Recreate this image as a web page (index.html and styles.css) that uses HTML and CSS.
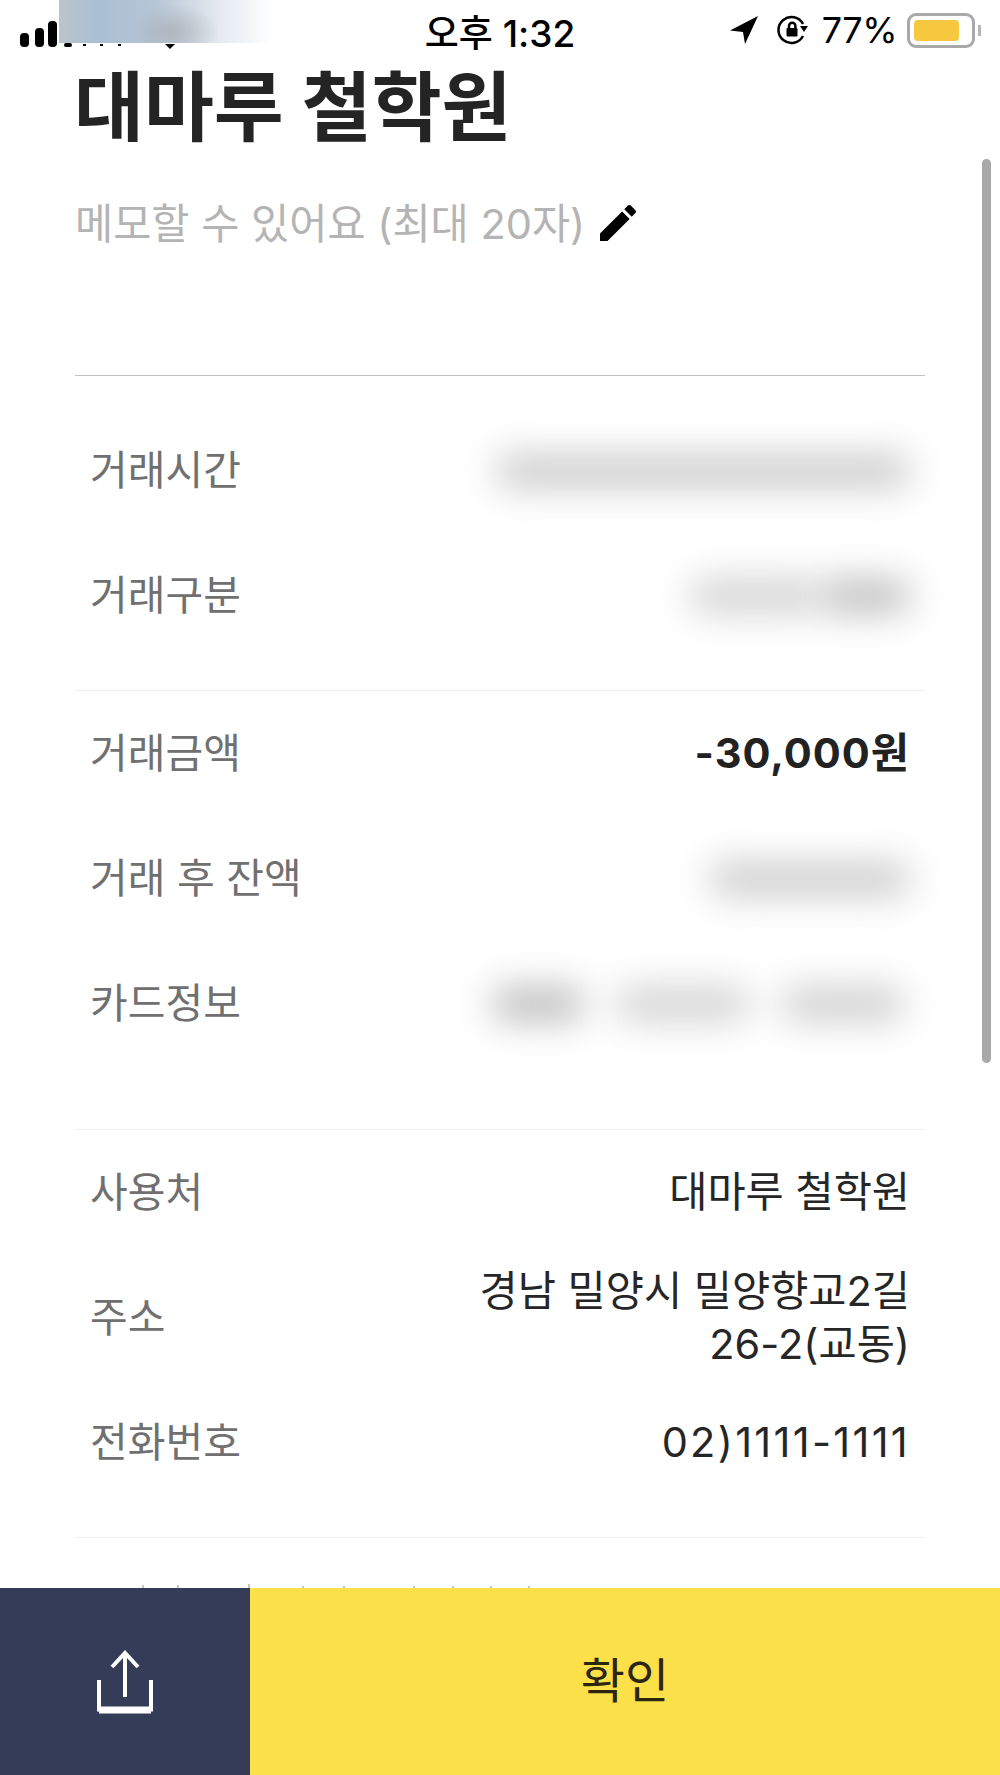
FILE: index.html
```html
<!DOCTYPE html>
<html lang="ko">

<head>
    <meta charset="UTF-8">
    <meta name="viewport" content="width=device-width, initial-scale=1.0">
    <title>거래 상세</title>
    <link rel="stylesheet" href="styles.css">
</head>

<body>
    <div class="status">
        <div class="status-left">
            <svg class="signal" width="190" height="50" viewBox="0 0 190 50">
                <rect x="20" y="33" width="9" height="14" rx="4" />
                <rect x="35" y="28" width="9" height="19" rx="4" />
                <rect x="48" y="21" width="9" height="26" rx="4" />
                <rect x="64" y="43" width="8" height="4" rx="2" />
                <rect x="83" y="44" width="3" height="2" />
                <rect x="100" y="44" width="3" height="2" />
                <rect x="118" y="44" width="3" height="2" />
                <path d="M165 44h10l-5 5z" />
            </svg>
            <div class="status-blur"></div>
        </div>
        <div class="status-time">오후 1:32</div>
        <div class="status-right">
            <svg width="30" height="30" viewBox="0 0 30 30">
                <path d="M29 1 1 15.500l13 1.500 2 12z" />
            </svg>
            <svg width="34" height="32" viewBox="0 0 34 32">
                <path class="rot" d="M27 22a13 13 0 1 1 0-12" />
                <path d="M24 12h8l-4 6z" />
                <path class="rot" d="M13 14v-2a3.200 3.200 0 0 1 6.400 0v2" />
                <rect x="10.500" y="14" width="11" height="8.500" rx="1" />
            </svg>
            <span class="percent">77%</span>
            <div class="battery"><div class="battery-fill"></div></div>
            <div class="battery-nub"></div>
        </div>
    </div>

    <main class="content">
        <h1 class="title">대마루 철학원</h1>
        <div class="memo">
            <span class="memo-text">메모할 수 있어요 (최대 20자)</span>
            <svg class="pencil" width="48" height="48" viewBox="0 0 24 24">
                <path d="M3 17.250V21h3.750L17.810 9.940l-3.750-3.750L3 17.250zM20.710 7.040c.39-.39.39-1.020 0-1.410l-2.340-2.340c-.39-.39-1.020-.39-1.410 0l-1.830 1.830 3.750 3.750 1.830-1.830z" />
            </svg>
        </div>

        <section class="group group-first">
            <div class="row">
                <span class="label">거래시간</span>
                <span class="blur-line"><i class="smudge w-long"></i></span>
            </div>
            <div class="row">
                <span class="label">거래구분</span>
                <span class="blur-line">
                    <i class="smudge w-short-a"></i>
                    <i class="smudge w-short-b"></i>
                </span>
            </div>
        </section>

        <section class="group group-money">
            <div class="row">
                <span class="label">거래금액</span>
                <span class="value amount">-30,000원</span>
            </div>
            <div class="row">
                <span class="label">거래 후 잔액</span>
                <span class="blur-line"><i class="smudge w-mid"></i></span>
            </div>
            <div class="row">
                <span class="label">카드정보</span>
                <span class="blur-line card">
                    <i class="smudge w-a"></i>
                    <i class="smudge w-b"></i>
                    <i class="smudge w-c"></i>
                </span>
            </div>
        </section>

        <section class="group group-shop">
            <div class="row">
                <span class="label">사용처</span>
                <span class="value">대마루 철학원</span>
            </div>
            <div class="row">
                <span class="label">주소</span>
                <span class="value">경남 밀양시 밀양향교2길<br>26-2(교동)</span>
            </div>
            <div class="row">
                <span class="label">전화번호</span>
                <span class="value phone">02)1111-1111</span>
            </div>
        </section>
        <div class="group-end"></div>

        <svg class="cut-line" width="540" height="4" viewBox="0 0 540 4">
            <path d="M143 1v3M178 1v3M249 0v4M303 2v2M344 2v2M414 2v2M453 2v2M491 2v2M529 2v2" />
        </svg>
    </main>

    <div class="scrollbar"></div>

    <footer class="bottom">
        <button type="button" class="btn-share">
            <svg width="56" height="64" viewBox="0 0 56 64">
                <path d="M28 2v45M15 17 28 3l13 14" />
                <path d="M2 30v29.500h52V30" />
                <path class="tray" d="M2 60h52" />
            </svg>
        </button>
        <button type="button" class="btn-ok">확인</button>
    </footer>
</body>
</html>
```

FILE: styles.css
```css
* {
    box-sizing: border-box;
}

html,
body {
    margin: 0;
    height: 100%;
}

body {
    position: relative;
    display: flex;
    flex-direction: column;
    width: 1000px;
    height: 1775px;
    overflow: hidden;
    background-color: #ffffff;
    font-family: Inter, "Noto Sans CJK KR", sans-serif;
}

/* status bar */
.status {
    display: grid;
    grid-template-columns: 1fr auto 1fr;
    align-items: center;
    height: 62px;
    flex-shrink: 0;
}

.status-left {
    position: relative;
    height: 62px;
}

.signal {
    display: block;
    fill: #000000;
}

.status-blur {
    position: absolute;
    left: 59px;
    top: 0;
    width: 214px;
    height: 43px;
    background:
        radial-gradient(ellipse 45px 28px at 115px 32px, rgba(165, 170, 175, 0.65), transparent),
        linear-gradient(90deg, #bcc4cb 0, #a9bfd3 18%, #b6c6d6 45%, #e4eaf0 75%, #ffffff 100%);
}

.status-time {
    font-size: 37px;
    font-weight: 500;
    color: #000000;
    margin-top: -1px;
}

.status-right {
    display: flex;
    align-items: center;
    justify-content: flex-end;
    margin-top: -2px;
    padding-right: 19px;
}

.status-right svg {
    fill: #000000;
    margin-right: 17px;
}

.status-right .rot {
    fill: none;
    stroke: #000000;
    stroke-width: 2.500;
}

.status-right svg + svg {
    margin-right: 12px;
}

.percent {
    font-size: 36px;
    letter-spacing: -0.500px;
    color: #000000;
    margin-right: 10px;
}

.battery {
    width: 68px;
    height: 35px;
    padding: 4px;
    border: 3px solid #a9a9a9;
    border-radius: 9px;
}

.battery-fill {
    width: 45px;
    height: 100%;
    background-color: #f5c83f;
    border-radius: 4px;
}

.battery-nub {
    width: 3px;
    height: 11px;
    margin-left: 3px;
    background-color: #b5b5b5;
}

/* content */
.content {
    flex: 1;
    min-height: 0;
    padding: 0 75px;
    overflow: hidden;
}

.title {
    margin: 0 0 0 -1px;
    font-size: 76px;
    line-height: 90px;
    font-weight: 700;
    color: #242424;
}

.memo {
    display: flex;
    align-items: center;
    gap: 9px;
    height: 70px;
    margin-top: 36px;
    font-size: 41.500px;
    color: #b4b4b4;
}

.memo-text {
    margin-top: -5px;
}

.pencil {
    fill: #000000;
}

.group {
    border-top: 1px solid #eeeeee;
}

.group-first {
    margin-top: 117px;
    padding: 32px 0;
    border-top-color: #c2c2c2;
}

.group-money {
    padding-bottom: 63px;
}

.group-shop {
    padding-bottom: 32px;
}

.group-end {
    border-top: 1px solid #eeeeee;
}

.cut-line {
    display: block;
    margin: 46px 0 0 -75px;
    stroke: #8c8c8c;
    stroke-width: 1;
}

.row {
    display: flex;
    justify-content: space-between;
    align-items: center;
    height: 125px;
    padding: 0 15px;
}

.label {
    font-size: 41px;
    line-height: 53px;
    color: #707070;
}

.value {
    font-size: 41.500px;
    line-height: 53px;
    color: #262626;
    text-align: right;
}

.amount {
    font-weight: 700;
    letter-spacing: 1px;
    color: #222222;
}

.phone {
    letter-spacing: 2.300px;
}

/* redacted values */
.blur-line {
    display: flex;
    justify-content: flex-end;
}

.card {
    gap: 32px;
    padding-right: 6px;
}

.smudge {
    display: block;
    height: 34px;
    background-color: #cbcbcb;
    border-radius: 14px;
    filter: blur(18px);
}

.w-long {
    width: 414px;
}

.w-short-a {
    width: 130px;
    background-color: #d2d2d2;
}

.w-short-b {
    width: 90px;
    background-color: #bebebe;
}

.w-mid {
    width: 200px;
    background-color: #cccccc;
}

.w-a {
    width: 92px;
    background-color: #bcbcbc;
}

.w-b {
    width: 134px;
    background-color: #d2d2d2;
}

.w-c {
    width: 122px;
    background-color: #cecece;
}

.scrollbar {
    position: absolute;
    left: 982px;
    top: 159px;
    width: 9px;
    height: 904px;
    background-color: #a8a8a8;
    border-radius: 5px;
}

/* bottom buttons */
.bottom {
    display: flex;
    height: 187px;
    flex-shrink: 0;
}

.bottom button {
    border: 0;
    padding: 0;
    font-family: inherit;
}

.btn-share {
    display: flex;
    align-items: center;
    justify-content: center;
    width: 250px;
    background-color: #343c58;
}

.btn-share svg {
    fill: none;
    stroke: #ffffff;
    stroke-width: 4;
}

.btn-share .tray {
    stroke-width: 7;
}

.bottom .btn-ok {
    flex: 1;
    background-color: #fbe04a;
    color: #2b260f;
    font-size: 48px;
    padding-bottom: 10px;
}
```
